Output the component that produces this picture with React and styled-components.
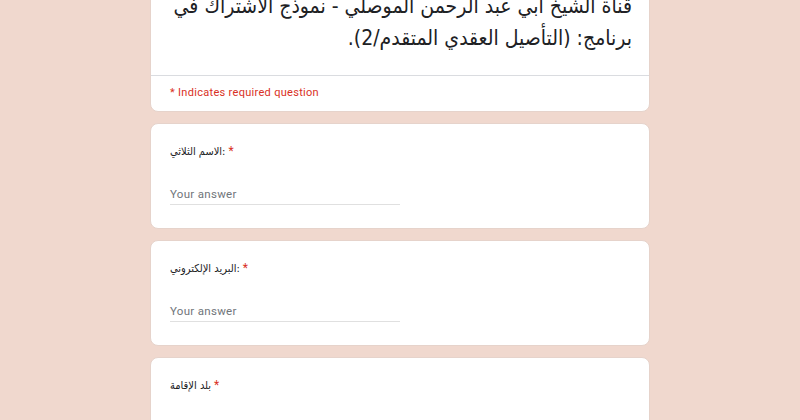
import styled, { createGlobalStyle } from 'styled-components';

const GlobalStyle = createGlobalStyle`
  body {
    margin: 0;
    background: #f0d8ce;
    font-family: Roboto, "DejaVu Sans", sans-serif;
    overflow: hidden;
  }
`;

const Page = styled.div`
  width: 500px;
  margin: -36px auto 0;
  display: flex;
  flex-direction: column;
  gap: 11px;
`;

const Card = styled.div`
  background: #fff;
  border: 1px solid #e6d3cb;
  border-radius: 8px;
  padding: 19px 19px 23px;
`;

const HeaderCard = styled(Card)`
  padding: 0;
`;

const Title = styled.h1`
  margin: 0;
  padding: 25px 17px 21px 20px;
  direction: rtl;
  text-align: right;
  white-space: nowrap;
  font-family: "DejaVu Sans Condensed", "DejaVu Sans", sans-serif;
  font-weight: 400;
  font-size: 21px;
  line-height: 32px;
  color: #202124;
`;

const Divider = styled.div`
  height: 1px;
  background: #dadce0;
`;

const Required = styled.div`
  padding: 10px 19px 11px;
  font-family: Roboto, sans-serif;
  font-size: 11px;
  line-height: 14px;
  letter-spacing: 0.3px;
  color: #d93025;
`;

const Label = styled.div`
  font-family: "DejaVu Sans Condensed", "DejaVu Sans", sans-serif;
  font-size: 11px;
  line-height: 16px;
  color: #202124;
`;

const Star = styled.span`
  color: #d93025;
  font-family: Roboto, sans-serif;
  font-size: 12px;
`;

const Answer = styled.div`
  margin-top: 25px;
  width: 230px;
  height: 19px;
  border-bottom: 1px solid #e0e0e0;
  font-family: Roboto, sans-serif;
  font-size: 11.5px;
  line-height: 19px;
  color: #70757a;
  letter-spacing: 0.3px;
`;

const Question = ({ label }) => (
  <Card>
    <Label>
      {label}
      <Star> *</Star>
    </Label>
    <Answer>Your answer</Answer>
  </Card>
);

export default function App() {
  return (
    <>
      <GlobalStyle />
      <Page>
        <HeaderCard>
          <Title>
            قناة الشيخ ابي عبد الرحمن الموصلي - نموذج الاشتراك في
            <br />
            برنامج: (التأصيل العقدي المتقدم/2).
          </Title>
          <Divider />
          <Required>* Indicates required question</Required>
        </HeaderCard>
        <Question label="الاسم الثلاثي:" />
        <Question label="البريد الإلكتروني:" />
        <Question label="بلد الإقامة" />
      </Page>
    </>
  );
}
